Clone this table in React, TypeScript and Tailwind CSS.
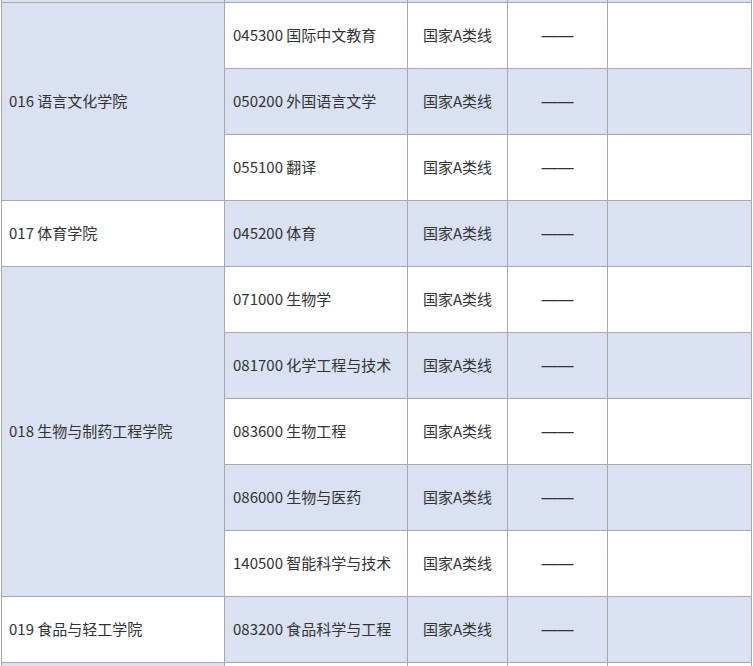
import React from "react";

type Row = { college?: { name: string; span: number; shade: boolean }; major: string; shade: boolean; hasData: boolean };

const rows: Row[] = [
  { college: { name: "", span: 1, shade: true }, major: "", shade: true, hasData: false },
  { college: { name: "016 语言文化学院", span: 3, shade: true }, major: "045300 国际中文教育", shade: false, hasData: true },
  { major: "050200 外国语言文学", shade: true, hasData: true },
  { major: "055100 翻译", shade: false, hasData: true },
  { college: { name: "017 体育学院", span: 1, shade: false }, major: "045200 体育", shade: true, hasData: true },
  { college: { name: "018 生物与制药工程学院", span: 5, shade: true }, major: "071000 生物学", shade: false, hasData: true },
  { major: "081700 化学工程与技术", shade: true, hasData: true },
  { major: "083600 生物工程", shade: false, hasData: true },
  { major: "086000 生物与医药", shade: true, hasData: true },
  { major: "140500 智能科学与技术", shade: false, hasData: true },
  { college: { name: "019 食品与轻工学院", span: 1, shade: false }, major: "083200 食品科学与工程", shade: true, hasData: true },
  { college: { name: "", span: 1, shade: true }, major: "", shade: false, hasData: false },
];

const cell = "border border-[#a8a8a8] align-middle";

export default function App() {
  return (
    <div
      className="w-[753px] h-[666px] overflow-hidden bg-white text-[15px] text-[#333333]"
      style={{ fontFamily: '"Noto Sans CJK SC", "Noto Sans", sans-serif' }}
    >
      <div className="-mt-[64px] pl-[1px]">
        <table className="table-fixed border-collapse w-[750px]">
          <colgroup>
            <col className="w-[223px]" />
            <col className="w-[183px]" />
            <col className="w-[100px]" />
            <col className="w-[100px]" />
            <col className="w-[144px]" />
          </colgroup>
          <tbody>
            {rows.map((r, i) => {
              const bg = r.shade ? "bg-[#d9e1f2]" : "bg-white";
              return (
                <tr key={i} className="h-[66px]">
                  {r.college && (
                    <td
                      rowSpan={r.college.span}
                      className={`${cell} pl-[7px] ${r.college.shade ? "bg-[#d9e1f2]" : "bg-white"}`}
                    >
                      {r.college.name}
                    </td>
                  )}
                  <td className={`${cell} pl-[8px] ${bg}`}>{r.major}</td>
                  <td className={`${cell} text-center ${bg}`}>{r.hasData ? "国家A类线" : ""}</td>
                  <td className={`${cell} text-center ${bg}`}>
                    {r.hasData ? (
                      <span className="text-[16px]" style={{ fontFamily: '"Liberation Sans", sans-serif' }}>
                        ——
                      </span>
                    ) : (
                      ""
                    )}
                  </td>
                  <td className={`${cell} ${bg}`}></td>
                </tr>
              );
            })}
          </tbody>
        </table>
      </div>
    </div>
  );
}
